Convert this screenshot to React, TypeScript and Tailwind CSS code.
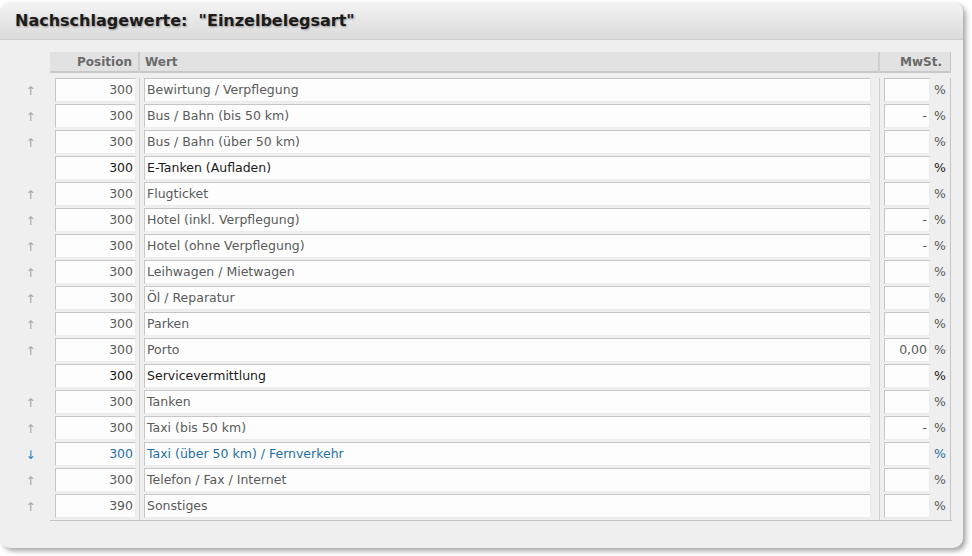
import React from "react"

type Row = {
  pos: string
  label: string
  mwst?: string
  kind: "up" | "none" | "down"
}

const rows: Row[] = [
  { pos: "300", label: "Bewirtung / Verpflegung", kind: "up" },
  { pos: "300", label: "Bus / Bahn (bis 50 km)", mwst: "-", kind: "up" },
  { pos: "300", label: "Bus / Bahn (über 50 km)", kind: "up" },
  { pos: "300", label: "E-Tanken (Aufladen)", kind: "none" },
  { pos: "300", label: "Flugticket", kind: "up" },
  { pos: "300", label: "Hotel (inkl. Verpflegung)", mwst: "-", kind: "up" },
  { pos: "300", label: "Hotel (ohne Verpflegung)", mwst: "-", kind: "up" },
  { pos: "300", label: "Leihwagen / Mietwagen", kind: "up" },
  { pos: "300", label: "Öl / Reparatur", kind: "up" },
  { pos: "300", label: "Parken", kind: "up" },
  { pos: "300", label: "Porto", mwst: "0,00", kind: "up" },
  { pos: "300", label: "Servicevermittlung", kind: "none" },
  { pos: "300", label: "Tanken", kind: "up" },
  { pos: "300", label: "Taxi (bis 50 km)", mwst: "-", kind: "up" },
  { pos: "300", label: "Taxi (über 50 km) / Fernverkehr", kind: "down" },
  { pos: "300", label: "Telefon / Fax / Internet", kind: "up" },
  { pos: "390", label: "Sonstiges", kind: "up" },
]

const field =
  "h-[24px] border border-t-[#c6c6c6] border-l-[#c6c6c6] border-r-[#ececec] border-b-[#ececec] bg-[#fdfdfd] flex items-center"

function LookupRow({ row }: { row: Row }) {
  const color =
    row.kind === "down" ? "text-[#1f6fa3]" : row.kind === "none" ? "text-[#1a1a1a]" : "text-[#5a5a5a]"
  return (
    <div className="flex h-[26px] items-start">
      <div className="w-[50px] h-[24px] flex items-center justify-center pl-[11px] pt-[2px] text-[12px]">
        {row.kind === "up" && <span className="text-[#a6a6a6]">↑</span>}
        {row.kind === "down" && <span className="text-[#2a7db5]">↓</span>}
      </div>
      <div className={`w-[90px] h-[26px] pl-[5px] border-r border-[#cfcfcf] ${color}`}>
        <div className={`${field} w-[81px] justify-end pr-[2px]`}>{row.pos}</div>
      </div>
      <div className={`w-[740px] h-[26px] pl-[4px] border-r border-[#cfcfcf] ${color}`}>
        <div className={`${field} w-[727px] pl-[2px]`}>{row.label}</div>
      </div>
      <div className={`w-[71px] h-[26px] pl-[4px] flex items-start border-r border-[#c4c4c4] ${color}`}>
        <div className={`${field} w-[46px] justify-end pr-[2px]`}>{row.mwst ?? ""}</div>
        <span className="ml-[4px] h-[24px] flex items-center">%</span>
      </div>
    </div>
  )
}

export default function App() {
  return (
    <div className="w-[972px] h-[556px] bg-white pt-[2px] font-['DejaVu_Sans',Verdana,sans-serif] text-[12.5px]">
      <div className="w-[963px] h-[546px] rounded-[10px] bg-[#efefef] shadow-[3px_3px_5px_rgba(0,0,0,0.35)] overflow-hidden flex flex-col">
        {/* Title bar */}
        <div className="h-[38px] shrink-0 bg-gradient-to-b from-[#f4f4f4] to-[#dadada] border-b border-[#d0d0d0] flex items-center pl-[15px] pt-[1px]">
          <h1 className="text-[16px] font-bold text-[#1c1c1c] [text-shadow:1px_1px_2px_rgba(0,0,0,0.35)] whitespace-pre">
            {'Nachschlagewerte:  "Einzelbelegsart"'}
          </h1>
        </div>

        {/* Table */}
        <div className="pt-[12px]">
          <div className="flex h-[21px] ml-[50px] w-[901px] font-bold text-[12px] text-[#6a6a6a]">
            <div className="w-[90px] bg-[#e2e2e2] border-b-2 border-[#c8c8c8] border-r-2 border-r-[#cfcfcf] flex items-center justify-end pr-[6px]">
              Position
            </div>
            <div className="w-[740px] bg-[#e2e2e2] border-b-2 border-[#c8c8c8] border-r-2 border-r-[#cfcfcf] flex items-center pl-[5px]">
              Wert
            </div>
            <div className="w-[71px] bg-[#e2e2e2] border-b-2 border-[#c8c8c8] border-r border-r-[#c4c4c4] flex items-center justify-end pr-[8px]">
              MwSt.
            </div>
          </div>
          <div className="pt-[5px]">
            {rows.map((r, i) => (
              <LookupRow key={i} row={r} />
            ))}
          </div>
          <div className="ml-[50px] w-[902px] border-t border-[#c4c4c4]" />
        </div>
      </div>
    </div>
  )
}
